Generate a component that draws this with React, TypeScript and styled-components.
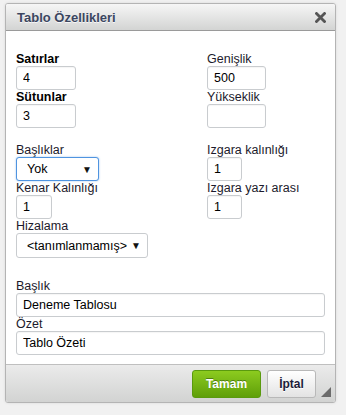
import React from "react";
import styled, { createGlobalStyle } from "styled-components";

const GlobalStyle = createGlobalStyle`
  html, body {
    margin: 0;
    padding: 0;
    background: #f1f1f1;
    font-family: "Liberation Sans", Arial, sans-serif;
  }
`;

const App = () => {
  return (
    <>
      <GlobalStyle />
      <Page>
        <Dialog>
          <TitleBar>
            <Title>Tablo Özellikleri</Title>
            <Close>
              <svg width="11" height="11" viewBox="0 0 11 11">
                <path
                  d="M1.5 1.5 L9.5 9.5 M9.5 1.5 L1.5 9.5"
                  stroke="#555"
                  strokeWidth="2.8"
                  strokeLinecap="square"
                />
              </svg>
            </Close>
          </TitleBar>

          <Body>
            <Columns>
              <Field>
                <Label bold>Satırlar</Label>
                <Input w={60} defaultValue="4" />
                <Label bold>Sütunlar</Label>
                <Input w={60} defaultValue="3" />
              </Field>
              <Field>
                <Label>Genişlik</Label>
                <Input w={59} defaultValue="500" />
                <Label>Yükseklik</Label>
                <Input w={59} defaultValue="" />
              </Field>
            </Columns>

            <Columns gap={15}>
              <Field>
                <Label>Başlıklar</Label>
                <Select w={83} focused>
                  <span>Yok</span>
                  <Arrow>▼</Arrow>
                </Select>
                <Label>Kenar Kalınlığı</Label>
                <Input w={36} defaultValue="1" />
                <Label>Hizalama</Label>
                <Select w={132} h={25}>
                  <span>&lt;tanımlanmamış&gt;</span>
                  <Arrow>▼</Arrow>
                </Select>
              </Field>
              <Field>
                <Label>Izgara kalınlığı</Label>
                <Input w={35} defaultValue="1" />
                <Label>Izgara yazı arası</Label>
                <Input w={35} defaultValue="1" />
              </Field>
            </Columns>

            <Wide>
              <Label>Başlık</Label>
              <Input defaultValue="Deneme Tablosu" />
              <Label>Özet</Label>
              <Input defaultValue="Tablo Özeti" />
            </Wide>
          </Body>

          <Footer>
            <OkButton>Tamam</OkButton>
            <CancelButton>İptal</CancelButton>
            <Grip />
          </Footer>
        </Dialog>
      </Page>
    </>
  );
};

export default App;

const Page = styled.div`
  padding: 3px 0 12px 5px;
`;

const Dialog = styled.div`
  width: 331px;
  box-sizing: border-box;
  border: 1px solid #b4b4b4;
  border-radius: 3px;
  background: #fff;
  box-shadow: 0 0 3px rgba(0, 0, 0, 0.1);
  overflow: hidden;
`;

const TitleBar = styled.div`
  height: 26px;
  display: flex;
  align-items: center;
  justify-content: space-between;
  padding: 0 9px 0 11px;
  background: linear-gradient(#f6f6f6, #d3d4d3);
  border-bottom: 1px solid #9a9a9a;
`;

const Title = styled.div`
  font-size: 13px;
  font-weight: bold;
  color: #3b4660;
  text-shadow: 0 1px 0 rgba(255, 255, 255, 0.75);
  line-height: 26px;
  padding-top: 1px;
`;

const Close = styled.div`
  display: flex;
  align-items: center;
  padding-top: 1px;
  cursor: pointer;
`;

const Body = styled.div`
  padding: 21px 10px 9px 10px;
`;

const Columns = styled.div<{ gap?: number }>`
  display: grid;
  grid-template-columns: 191px 1fr;
  margin-top: ${(p) => p.gap || 0}px;
`;

const Field = styled.div`
  display: flex;
  flex-direction: column;
  align-items: flex-start;
`;

const Wide = styled.div`
  display: flex;
  flex-direction: column;
  margin-top: 21px;
`;

const Label = styled.div<{ bold?: boolean }>`
  font-size: 12.5px;
  line-height: 14px;
  height: 14px;
  color: ${(p) => (p.bold ? "#000" : "#1c1a2c")};
  font-weight: ${(p) => (p.bold ? "bold" : "normal")};
  white-space: nowrap;
`;

const Input = styled.input<{ w?: number }>`
  box-sizing: border-box;
  width: ${(p) => (p.w ? `${p.w}px` : "100%")};
  height: 24px;
  margin: 0;
  padding: 0 6px;
  border: 1px solid #c9cccf;
  border-radius: 3px;
  background: #fff;
  font-family: "Liberation Sans", Arial, sans-serif;
  font-size: 12.5px;
  color: #000;
  outline: none;
  box-shadow: inset 0 1px 1px rgba(0, 0, 0, 0.04);
`;

const Select = styled.div<{ w: number; h?: number; focused?: boolean }>`
  box-sizing: border-box;
  width: ${(p) => p.w}px;
  height: ${(p) => p.h || 24}px;
  display: flex;
  align-items: center;
  justify-content: space-between;
  padding: 0 6px 0 10px;
  border: 1px solid ${(p) => (p.focused ? "#4f94e0" : "#c9cccf")};
  border-radius: 3px;
  background: #fff;
  font-size: 12.5px;
  color: #000;
  box-shadow: ${(p) => (p.focused ? "0 0 2px rgba(79, 148, 224, 0.6)" : "none")};
`;

const Arrow = styled.span`
  font-size: 10px;
  color: #111;
`;

const Footer = styled.div`
  position: relative;
  display: flex;
  justify-content: flex-end;
  gap: 6px;
  padding: 5px 19px 4px 0;
  background: linear-gradient(#ebebeb, #d2d3d2);
  border-top: 1px solid #bfbfbf;
`;

const Button = styled.div`
  box-sizing: border-box;
  height: 28px;
  display: flex;
  align-items: center;
  justify-content: center;
  border-radius: 3px;
  font-size: 12px;
  font-weight: bold;
  cursor: pointer;
`;

const OkButton = styled(Button)`
  width: 69px;
  color: #fff;
  background: linear-gradient(#8ccb1f, #5f9f09);
  border: 1px solid #5a9a0e;
  text-shadow: 0 -1px 0 #4f7f10;
`;

const CancelButton = styled(Button)`
  width: 49px;
  color: #1d1d3a;
  background: linear-gradient(#ffffff, #e3e3e3);
  border: 1px solid #b8b8b8;
  text-shadow: 0 1px 0 #fff;
`;

const Grip = styled.div`
  position: absolute;
  right: 4px;
  bottom: 5px;
  width: 0;
  height: 0;
  border-style: solid;
  border-width: 0 0 10px 10px;
  border-color: transparent transparent #6b6b6b transparent;
`;
